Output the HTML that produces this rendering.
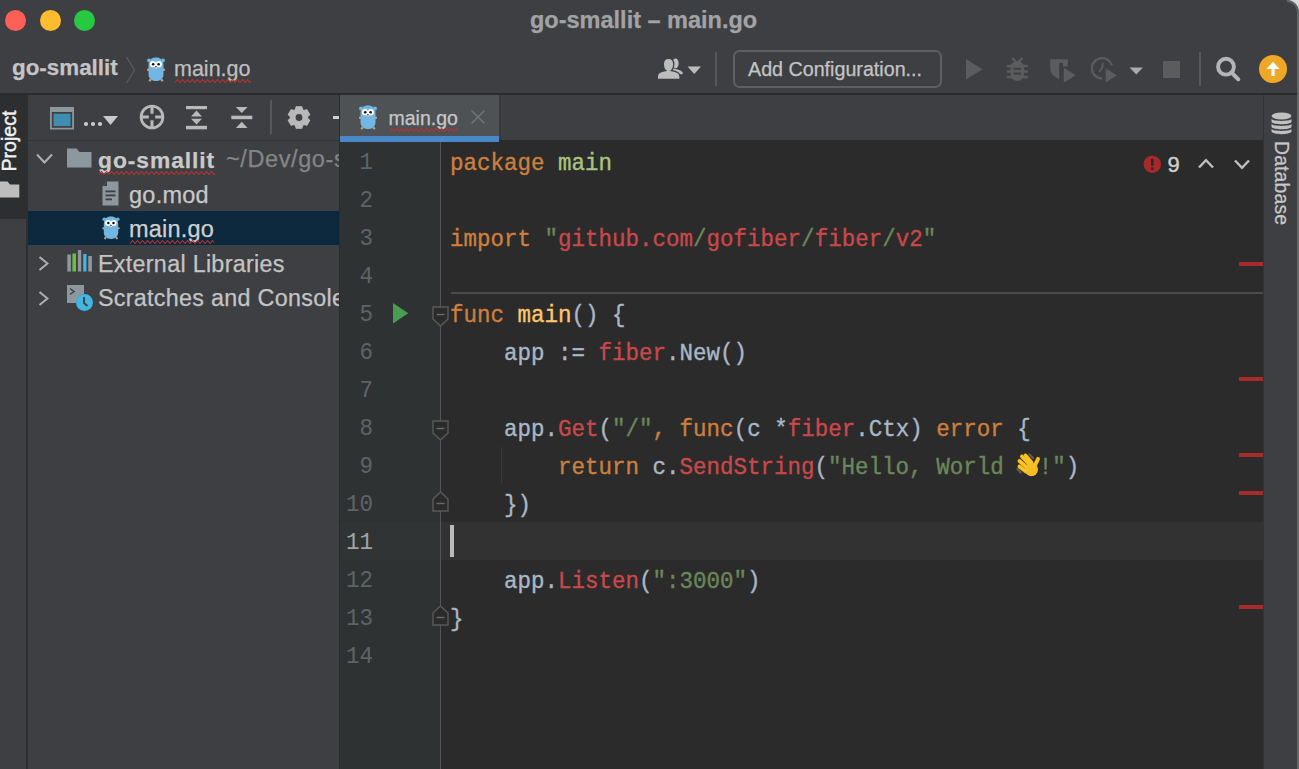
<!DOCTYPE html>
<html><head><meta charset="utf-8">
<style>
*{margin:0;padding:0;box-sizing:border-box}
html,body{width:1299px;height:769px;overflow:hidden;background:#3d3f43}
body{position:relative;font-family:"Liberation Sans",sans-serif}
.a{position:absolute}
.ui{font-family:"Liberation Sans",sans-serif;white-space:nowrap;-webkit-text-stroke:0.25px currentColor}
.mono{font-family:"Liberation Mono",monospace;font-size:22.5px;white-space:pre}
.ln{position:absolute;left:340px;width:33px;text-align:right;font-family:"Liberation Mono",monospace;font-size:22.5px;color:#606366;line-height:38px;height:38px;margin-top:2px;transform:scaleY(1.1);transform-origin:0 25px;}
.cl{position:absolute;left:450px;line-height:38px;height:38px;color:#a9b7c6;margin-top:3px;transform:scaleY(1.08);transform-origin:0 25px;-webkit-text-stroke:0.35px currentColor}
.k{color:#cd7f3e}
.s{color:#6a8759}
.r{color:#c9484a}
.f{color:#ffc66d}
.p{color:#a9c47f}
.mark{position:absolute;left:1239px;width:24px;height:4px;background:#a82a2a}
</style></head><body>

<!-- title bar -->
<div class="a" style="left:0;top:0;width:1299px;height:93px;background:#3d3f43"></div>
<div class="a" style="left:5px;top:10px;width:21px;height:21px;border-radius:50%;background:#fe5f57"></div>
<div class="a" style="left:40px;top:10px;width:21px;height:21px;border-radius:50%;background:#febc2e"></div>
<div class="a" style="left:74px;top:10px;width:21px;height:21px;border-radius:50%;background:#28c840"></div>
<div class="a ui" style="left:530px;top:4.7px;font-size:23.5px;font-weight:bold;color:#a3a3a5;line-height:30px">go-smallit – main.go</div>

<!-- breadcrumb -->
<div class="a ui" style="left:12px;top:53px;font-size:22.4px;font-weight:bold;color:#c4c4c4;line-height:30px">go-smallit</div>

<!-- toolbar bottom border -->
<div class="a" style="left:0;top:93px;width:1299px;height:2px;background:#2b2b2d"></div>

<!-- left strip -->
<div class="a" style="left:0;top:95px;width:26px;height:674px;background:#3d3f43"></div>
<div class="a" style="left:0;top:95px;width:26px;height:124px;background:#2c2e30"></div>
<div class="a" style="left:26px;top:95px;width:2px;height:674px;background:#2d2f31"></div>

<!-- project panel -->
<div class="a" style="left:28px;top:95px;width:311px;height:674px;background:#3d3f43"></div>
<div class="a" style="left:28px;top:140px;width:311px;height:1px;background:#333436"></div>
<div class="a" style="left:28px;top:211px;width:311px;height:34px;background:#0d293e"></div>
<div class="a" style="left:339px;top:95px;width:1px;height:674px;background:#2b2b2b"></div>

<!-- tab bar -->
<div class="a" style="left:340px;top:95px;width:923px;height:45px;background:#3d3f43"></div>
<div class="a" style="left:340px;top:95px;width:159px;height:41px;background:#4e5254"></div>
<div class="a" style="left:499px;top:95px;width:1.5px;height:45px;background:#38393c"></div>


<!-- editor -->
<div class="a" style="left:340px;top:140px;width:923px;height:629px;background:#2b2b2b"></div>
<div class="a" style="left:340px;top:140px;width:100px;height:629px;background:#2f3233"></div>
<div class="a" style="left:340px;top:522px;width:100px;height:38px;background:#313435"></div>
<div class="a" style="left:441px;top:522px;width:822px;height:38px;background:#323232"></div>
<div class="a" style="left:439.5px;top:140px;width:1.6px;height:629px;background:#555555"></div>
<div class="a" style="left:340px;top:136px;width:159px;height:5.6px;background:#4a88c7"></div>
<div class="a" style="left:451px;top:292px;width:812px;height:1.5px;background:#4b4b4b"></div>

<!-- right strip -->
<div class="a" style="left:1263px;top:95px;width:1px;height:674px;background:#323335"></div>
<div class="a" style="left:1264px;top:95px;width:33px;height:674px;background:#3d3f43"></div>
<div class="a" style="left:1297px;top:0;width:2px;height:769px;background:#636567"></div>

<!-- error stripe marks -->
<div class="mark" style="top:262px"></div>
<div class="mark" style="top:376.5px"></div>
<div class="mark" style="top:452.5px"></div>
<div class="mark" style="top:490.5px"></div>
<div class="mark" style="top:604.5px"></div>

<!-- line numbers -->
<div class="ln" style="top:142px">1</div>
<div class="ln" style="top:180px">2</div>
<div class="ln" style="top:218px">3</div>
<div class="ln" style="top:256px">4</div>
<div class="ln" style="top:294px">5</div>
<div class="ln" style="top:332px">6</div>
<div class="ln" style="top:370px">7</div>
<div class="ln" style="top:408px">8</div>
<div class="ln" style="top:446px">9</div>
<div class="ln" style="top:484px">10</div>
<div class="ln" style="top:522px;color:#a4a3a3">11</div>
<div class="ln" style="top:560px">12</div>
<div class="ln" style="top:598px">13</div>
<div class="ln" style="top:636px">14</div>

<!-- code -->
<div class="cl mono" style="top:142px"><span class="k">package</span> <span class="p">main</span></div>
<div class="cl mono" style="top:218px"><span class="k">import</span> <span class="s">"</span><span class="r">github.com</span><span class="s">/</span><span class="r">gofiber</span><span class="s">/</span><span class="r">fiber</span><span class="s">/</span><span class="r">v2</span><span class="s">"</span></div>
<div class="cl mono" style="top:294px"><span class="k">func</span> <span class="f">main</span>() {</div>
<div class="cl mono" style="top:332px">    app := <span class="r">fiber</span>.New()</div>
<div class="cl mono" style="top:408px">    app.<span class="r">Get</span>(<span class="s">"/"</span><span class="k">,</span> <span class="k">func</span>(c *<span class="r">fiber</span>.Ctx) <span class="k">error</span> {</div>
<div class="cl mono" style="top:446px">        <span class="k">return</span> c.<span class="r">SendString</span>(<span class="s">"Hello, World <span style="display:inline-block;width:21.6px"></span>!"</span>)</div>
<div class="cl mono" style="top:484px">    })</div>
<div class="cl mono" style="top:560px">    app.<span class="r">Listen</span>(<span class="s">":3000"</span>)</div>
<div class="cl mono" style="top:598px">}</div>

<!-- caret -->
<div class="a" style="left:450px;top:525px;width:4px;height:32px;background:#bbbbbb"></div>


<!-- SVG defs -->
<svg width="0" height="0" style="position:absolute">
 <defs>
  <symbol id="gopher" viewBox="0 0 18 25">
   <circle cx="2" cy="3.4" r="1.9" fill="#72b6e3"/>
   <circle cx="16" cy="3.4" r="1.9" fill="#72b6e3"/>
   <path d="M1.5 8.5 C1.5 3 4.5 0.5 9 0.5 C13.5 0.5 16.5 3 16.5 8.5 L16.5 17 C16.5 21.5 13.5 24 9 24 C4.5 24 1.5 21.5 1.5 17 Z" fill="#72b6e3"/>
   <circle cx="1" cy="12.8" r="1.2" fill="#c9a083"/>
   <circle cx="17" cy="12.8" r="1.2" fill="#c9a083"/>
   <circle cx="3" cy="23.2" r="1.2" fill="#c9a083"/>
   <circle cx="15" cy="23.2" r="1.2" fill="#c9a083"/>
   <circle cx="6" cy="7.2" r="3.1" fill="#fff"/>
   <circle cx="11.8" cy="7.2" r="3.1" fill="#fff"/>
   <circle cx="6.2" cy="7.2" r="1.3" fill="#111"/>
   <circle cx="11.6" cy="7.2" r="1.3" fill="#111"/>
   <ellipse cx="8.9" cy="10.6" rx="1.3" ry="1.1" fill="#e8d2c0"/>
   <ellipse cx="8.9" cy="9.7" rx="0.8" ry="0.6" fill="#222"/>
  </symbol>
  <symbol id="wavy" viewBox="0 0 200 4" preserveAspectRatio="xMinYMid slice">
   <polyline fill="none" stroke="#b83430" stroke-width="1.05" points="0,3.5 2.5,0.5 5,3.5 7.5,0.5 10,3.5 12.5,0.5 15,3.5 17.5,0.5 20,3.5 22.5,0.5 25,3.5 27.5,0.5 30,3.5 32.5,0.5 35,3.5 37.5,0.5 40,3.5 42.5,0.5 45,3.5 47.5,0.5 50,3.5 52.5,0.5 55,3.5 57.5,0.5 60,3.5 62.5,0.5 65,3.5 67.5,0.5 70,3.5 72.5,0.5 75,3.5 77.5,0.5 80,3.5 82.5,0.5 85,3.5 87.5,0.5 90,3.5 92.5,0.5 95,3.5 97.5,0.5 100,3.5 102.5,0.5 105,3.5 107.5,0.5 110,3.5 112.5,0.5 115,3.5 117.5,0.5 120,3.5 122.5,0.5 125,3.5 127.5,0.5 130,3.5 132.5,0.5 135,3.5 137.5,0.5 140,3.5 142.5,0.5 145,3.5 147.5,0.5 150,3.5"/>
  </symbol>
 </defs>
</svg>

<!-- breadcrumb rest -->
<svg class="a" style="left:125px;top:56px" width="11" height="28" viewBox="0 0 11 28"><polyline points="1.5,1 9.5,14 1.5,27" fill="none" stroke="#5a6061" stroke-width="1.2"/></svg>
<svg class="a" style="left:146.5px;top:56.5px" width="18" height="25"><use href="#gopher"/></svg>
<div class="a ui" style="left:174px;top:54.2px;font-size:21.5px;color:#bfbfbf;line-height:30px">main.go</div>
<svg class="a" style="left:175px;top:79px" width="76" height="4"><use href="#wavy"/></svg>

<!-- user icon -->
<svg class="a" style="left:657px;top:58px" width="27" height="22" viewBox="0 0 27 22">
 <ellipse cx="18.6" cy="5.4" rx="3" ry="5" fill="#bdbdbd"/>
 <path d="M15.5 10.5 C20 11 25 12.5 25.8 14.8 C26 15.8 25 16.3 24 16.3 L18 16.3 Z" fill="#bdbdbd"/>
 <g stroke="#3d3f43" stroke-width="1.3" fill="#bdbdbd">
  <path d="M11.5 0.3 C8.3 0.3 6.3 2.6 6.3 6.3 C6.3 9.3 7.5 11.6 8.6 12.6 C4.2 13.2 0.3 15 0.3 18.2 L0.3 21.3 L23 21.3 L23 18.2 C23 15 19 13.2 14.5 12.6 C15.6 11.6 16.8 9.3 16.8 6.3 C16.8 2.6 14.7 0.3 11.5 0.3 Z"/>
 </g>
</svg>
<svg class="a" style="left:687px;top:66px" width="15" height="9" viewBox="0 0 15 9"><path d="M0.5 0.5 L14 0.5 L7.25 8 Z" fill="#bcbcbc"/></svg>
<div class="a" style="left:715px;top:52px;width:1.5px;height:34px;background:#56585b"></div>

<!-- Add configuration button -->
<div class="a" style="left:732.5px;top:50px;width:209px;height:38px;border:2px solid #5d6063;border-radius:6.5px;background:#3d3f43"></div>
<div class="a ui" style="left:748px;top:54px;font-size:19.7px;color:#c4c4c4;line-height:30px">Add Configuration...</div>

<!-- run toolbar icons (disabled) -->
<svg class="a" style="left:966px;top:59px" width="17" height="21" viewBox="0 0 17 21"><path d="M0 0 L16.5 10.2 L0 20.4 Z" fill="#5b5c5e"/></svg>
<svg class="a" style="left:1006px;top:57px" width="23" height="25" viewBox="0 0 23 25">
 <path d="M6.8 1.5 L10 5 M15.8 1.5 L12.6 5" stroke="#5b5c5e" stroke-width="2.3" stroke-linecap="round" fill="none"/>
 <path d="M11.3 4 C7 4 4.5 7 4.5 11.5 L4.5 16.5 C4.5 21 7.5 24 11.3 24 C15.1 24 18.1 21 18.1 16.5 L18.1 11.5 C18.1 7 15.6 4 11.3 4 Z" fill="#5b5c5e"/>
 <path d="M0.8 9 L21.8 9 M0.8 14.5 L21.8 14.5 M0.8 20 L21.8 20" stroke="#5b5c5e" stroke-width="2.5"/>
 <path d="M7.5 11.7 L15.1 11.7 M7.5 16.6 L15.1 16.6" stroke="#3d3f43" stroke-width="2"/>
</svg>
<svg class="a" style="left:1049px;top:58px" width="28" height="26" viewBox="0 0 28 26">
 <path d="M1.2 1.2 L18.8 1.2 L18.8 8.5 L14 8.5 L14 4.8 L10.2 4.8 L10.2 21 C5 19 1.2 15.5 1.2 10.5 Z" fill="#5b5c5e"/>
 <path d="M14.8 9.7 L26.8 17.2 L14.8 24.8 Z" fill="#5b5c5e"/>
</svg>
<svg class="a" style="left:1091px;top:57px" width="28" height="27" viewBox="0 0 28 27">
 <path d="M11 21.5 A10.2 10.2 0 1 1 20.8 8.3" fill="none" stroke="#5b5c5e" stroke-width="2.3"/>
 <path d="M11.6 6.5 L11.6 10 L8.6 14.2" fill="none" stroke="#5b5c5e" stroke-width="1.9" stroke-linecap="round"/>
 <path d="M14.7 11.3 L26 18.4 L14.7 25.5 Z" fill="#5b5c5e"/>
</svg>
<svg class="a" style="left:1129px;top:66.5px" width="15" height="8" viewBox="0 0 15 8"><path d="M0.5 0.5 L14 0.5 L7.25 7.5 Z" fill="#a9aaab"/></svg>
<div class="a" style="left:1162.5px;top:60.5px;width:17.5px;height:17.5px;background:#5b5c5e"></div>
<div class="a" style="left:1199px;top:52px;width:1.5px;height:34px;background:#56585b"></div>
<svg class="a" style="left:1215px;top:56px" width="27" height="27" viewBox="0 0 27 27">
 <circle cx="11" cy="10.7" r="7.9" fill="none" stroke="#b4b5b6" stroke-width="3.9"/>
 <path d="M16.5 16.5 L23.3 23.3" stroke="#b4b5b6" stroke-width="4" stroke-linecap="round"/>
</svg>
<svg class="a" style="left:1259px;top:55px" width="28" height="28" viewBox="0 0 28 28">
 <circle cx="14" cy="14" r="14" fill="#eea726"/>
 <path d="M14 6.8 L20.6 14 L15.6 14 L15.6 21 L12.5 21 L12.5 14 L7.4 14 Z" fill="#ffffff"/>
</svg>


<!-- left strip label -->
<div class="a ui" style="left:-22px;top:131.5px;width:62px;height:18px;transform:rotate(-90deg);font-size:19.6px;line-height:18px;color:#f0f0f0;text-align:center;-webkit-text-stroke:0.45px #f0f0f0">Project</div>
<svg class="a" style="left:0;top:181px" width="20" height="17" viewBox="0 0 20 17"><path d="M0 0.5 L7.5 0.5 L10 3.5 L19.3 3.5 L19.3 16.5 L0 16.5 Z" fill="#bdbdbd"/></svg>

<!-- project toolbar -->
<svg class="a" style="left:50px;top:107px" width="25" height="23" viewBox="0 0 25 23">
 <rect x="0" y="0" width="24" height="22.5" fill="#8d979e"/>
 <rect x="1.8" y="5" width="20.4" height="15.8" fill="#3d3f43"/>
 <rect x="3.5" y="6.7" width="17" height="12.4" fill="#3f8eb0"/>
</svg>
<div class="a" style="left:84px;top:122px;width:3.6px;height:3.6px;border-radius:50%;background:#c9c9c9"></div>
<div class="a" style="left:91px;top:122px;width:3.6px;height:3.6px;border-radius:50%;background:#c9c9c9"></div>
<div class="a" style="left:98px;top:122px;width:3.6px;height:3.6px;border-radius:50%;background:#c9c9c9"></div>
<svg class="a" style="left:103px;top:115.5px" width="15" height="9" viewBox="0 0 15 9"><path d="M0 0 L15 0 L7.5 9 Z" fill="#c9c9c9"/></svg>
<svg class="a" style="left:139px;top:104px" width="26" height="26" viewBox="0 0 26 26">
 <circle cx="13" cy="13" r="10.9" fill="none" stroke="#b9b9b9" stroke-width="2.8"/>
 <path d="M13 2 L13 9.8 M13 16.2 L13 24 M2 13 L9.8 13 M16.2 13 L24 13" stroke="#b9b9b9" stroke-width="3"/>
</svg>
<svg class="a" style="left:185px;top:105px" width="23" height="25" viewBox="0 0 23 25">
 <rect x="1" y="1" width="21" height="3.2" fill="#b9b9b9"/>
 <rect x="1" y="20.8" width="21" height="3.5" fill="#b9b9b9"/>
 <path d="M6 11.4 L11.5 5.6 L17 11.4 Z M6 13.8 L11.5 19.5 L17 13.8 Z" fill="#b9b9b9"/>
</svg>
<svg class="a" style="left:231px;top:105px" width="23" height="25" viewBox="0 0 23 25">
 <rect x="0.3" y="10.7" width="21" height="3.5" fill="#b9b9b9"/>
 <path d="M4.9 1.9 L16.6 1.9 L10.75 7.9 Z M4.9 23.1 L16.6 23.1 L10.75 16.8 Z" fill="#b9b9b9"/>
</svg>
<div class="a" style="left:270px;top:100px;width:1.5px;height:34px;background:#56585b"></div>
<svg class="a" style="left:287px;top:105px" width="24" height="25" viewBox="0 0 24 25">
 <path d="M8.49 4.65 L9.17 1.87 L14.83 1.87 L15.51 4.65 L17.05 5.54 L19.79 4.74 L22.62 9.63 L20.55 11.61 L20.55 13.39 L22.62 15.37 L19.79 20.26 L17.05 19.46 L15.51 20.35 L14.83 23.13 L9.17 23.13 L8.49 20.35 L6.95 19.46 L4.21 20.26 L1.38 15.37 L3.45 13.39 L3.45 11.61 L1.38 9.63 L4.21 4.74 L6.95 5.54 Z" fill="#b9b9b9" stroke="#b9b9b9" stroke-width="1.2" stroke-linejoin="round"/>
 <circle cx="12" cy="12.5" r="3.4" fill="#3d3f43"/>
</svg>
<div class="a" style="left:333px;top:116px;width:6px;height:3px;background:#d0d0d0"></div>

<!-- tree -->
<svg class="a" style="left:36px;top:153px" width="17" height="11" viewBox="0 0 17 11"><polyline points="1,1.5 8.5,9.5 16,1.5" fill="none" stroke="#b0b0b0" stroke-width="2"/></svg>
<svg class="a" style="left:67px;top:148px" width="25" height="20" viewBox="0 0 25 20"><path d="M0 0.5 L9.5 0.5 L12.5 4 L24.5 4 L24.5 19.5 L0 19.5 Z" fill="#8d979e"/></svg>
<div class="a ui" style="left:98px;top:144.8px;font-size:22.8px;font-weight:bold;letter-spacing:0.95px;color:#cacaca;line-height:30px">go-smallit</div>
<svg class="a" style="left:99px;top:170.5px" width="116" height="4"><use href="#wavy"/></svg>
<div class="a" style="left:226px;top:143px;width:113px;height:32px;overflow:hidden"><div class="ui" style="font-size:23.5px;letter-spacing:0.6px;color:#858585;line-height:32px">~/Dev/go-smallit</div></div>

<svg class="a" style="left:102px;top:181px" width="17" height="25" viewBox="0 0 17 25">
 <path d="M5 0.5 L16.5 0.5 L16.5 24.5 L0.5 24.5 L0.5 5 Z" fill="#8d979e"/>
 <path d="M0.5 5 L5 5 L5 0.5 Z" fill="#3d3f43"/>
 <rect x="3.5" y="9.5" width="10" height="1.8" fill="#3d3f43"/>
 <rect x="3.5" y="13.5" width="10" height="1.8" fill="#3d3f43"/>
 <rect x="3.5" y="17.5" width="6.5" height="1.8" fill="#3d3f43"/>
</svg>
<div class="a ui" style="left:129px;top:179.8px;font-size:23.5px;letter-spacing:0.25px;color:#c8c8c8;line-height:30px">go.mod</div>

<svg class="a" style="left:101.5px;top:216px" width="18" height="24"><use href="#gopher" width="18" height="24"/></svg>
<div class="a ui" style="left:129px;top:214px;font-size:23.5px;letter-spacing:0.2px;color:#d0d0d0;line-height:30px">main.go</div>
<svg class="a" style="left:130px;top:239.5px" width="84" height="4"><use href="#wavy"/></svg>

<svg class="a" style="left:38px;top:256px" width="11" height="15" viewBox="0 0 11 15"><polyline points="1.5,1 9.5,7.5 1.5,14" fill="none" stroke="#b0b0b0" stroke-width="2"/></svg>
<svg class="a" style="left:67px;top:250px" width="25" height="22" viewBox="0 0 25 22">
 <rect x="0.3" y="4.5" width="3.6" height="17" fill="#8d979e"/>
 <rect x="5.4" y="3.5" width="3.6" height="18" fill="#6bbf3a"/>
 <rect x="10.9" y="0" width="3.3" height="21.5" fill="#8d979e"/>
 <rect x="16.2" y="4" width="3.3" height="17.5" fill="#40b6e0"/>
 <rect x="21.3" y="6" width="3.6" height="15.5" fill="#8d979e"/>
</svg>
<div class="a ui" style="left:98px;top:248.5px;font-size:23.3px;letter-spacing:0.3px;color:#c4c4c4;line-height:30px">External Libraries</div>

<svg class="a" style="left:38px;top:291px" width="11" height="15" viewBox="0 0 11 15"><polyline points="1.5,1 9.5,7.5 1.5,14" fill="none" stroke="#b0b0b0" stroke-width="2"/></svg>
<svg class="a" style="left:66px;top:284px" width="28" height="28" viewBox="0 0 28 28">
 <path d="M1 1 L18 1 L18 10 C13 11 10.5 14.5 10.5 19 L1 19 Z" fill="#8d979e"/>
 <path d="M4 4.5 L8 7.5 L4 10.5" fill="none" stroke="#3d3f43" stroke-width="1.5"/>
 <circle cx="18.5" cy="18.5" r="8.5" fill="#40b6e0"/>
 <path d="M18 13 L18 19 L21.5 22" fill="none" stroke="#3d3f43" stroke-width="1.8"/>
</svg>
<div class="a" style="left:98px;top:282px;width:241px;height:32px;overflow:hidden"><div class="ui" style="font-size:23.3px;letter-spacing:0.3px;color:#c4c4c4;line-height:32px;margin-top:-0.5px">Scratches and Consoles</div></div>

<!-- tab content -->
<svg class="a" style="left:359px;top:104.5px" width="18" height="25"><use href="#gopher"/></svg>
<div class="a ui" style="left:388.5px;top:103.5px;font-size:19.5px;color:#c8c8c8;line-height:28px">main.go</div>
<svg class="a" style="left:389px;top:127.5px" width="69" height="4"><use href="#wavy"/></svg>
<svg class="a" style="left:471.3px;top:110.3px" width="14" height="14" viewBox="0 0 14 14"><path d="M1 1 L13 13 M13 1 L1 13" stroke="#6d7375" stroke-width="1.7" stroke-linecap="round"/></svg>

<!-- gutter icons -->
<svg class="a" style="left:392.5px;top:302.5px" width="16" height="21" viewBox="0 0 16 21"><path d="M0 0 L15.3 10.2 L0 20.4 Z" fill="#499c54"/></svg>
<svg class="a" style="left:432px;top:306px" width="17" height="21" viewBox="0 0 17 21"><path d="M1 1 L16 1 L16 13 L8.5 20 L1 13 Z" fill="#2b2b2b" stroke="#5a5a5a" stroke-width="1.4"/><path d="M4.5 8.5 L12.5 8.5" stroke="#6a6a6a" stroke-width="1.4"/></svg>
<svg class="a" style="left:432px;top:420px" width="17" height="21" viewBox="0 0 17 21"><path d="M1 1 L16 1 L16 13 L8.5 20 L1 13 Z" fill="#2b2b2b" stroke="#5a5a5a" stroke-width="1.4"/><path d="M4.5 8.5 L12.5 8.5" stroke="#6a6a6a" stroke-width="1.4"/></svg>
<svg class="a" style="left:432px;top:491px" width="17" height="21" viewBox="0 0 17 21"><path d="M1 20 L16 20 L16 8 L8.5 1 L1 8 Z" fill="#2b2b2b" stroke="#5a5a5a" stroke-width="1.4"/><path d="M4.5 12.5 L12.5 12.5" stroke="#6a6a6a" stroke-width="1.4"/></svg>
<svg class="a" style="left:432px;top:605px" width="17" height="21" viewBox="0 0 17 21"><path d="M1 20 L16 20 L16 8 L8.5 1 L1 8 Z" fill="#2b2b2b" stroke="#5a5a5a" stroke-width="1.4"/><path d="M4.5 12.5 L12.5 12.5" stroke="#6a6a6a" stroke-width="1.4"/></svg>
<div class="a" style="left:501px;top:447px;width:1px;height:36px;background:#3b3b3b"></div>

<!-- error indicator -->
<svg class="a" style="left:1143px;top:155px" width="19" height="19" viewBox="0 0 19 19"><circle cx="9.3" cy="9.2" r="8.7" fill="#a8292a"/><rect x="8" y="3.8" width="2.6" height="7" fill="#2b2b2b"/><rect x="8" y="12.3" width="2.6" height="2.6" fill="#2b2b2b"/></svg>
<div class="a mono" style="left:1167px;top:152px;font-size:22px;color:#cdcdcd;line-height:30px;-webkit-text-stroke:0.4px #cdcdcd">9</div>
<svg class="a" style="left:1198px;top:158px" width="16" height="11" viewBox="0 0 16 11"><polyline points="1,9.5 8,2.2 15,9.5" fill="none" stroke="#c0c0c0" stroke-width="2.4"/></svg>
<svg class="a" style="left:1234px;top:159px" width="16" height="11" viewBox="0 0 16 11"><polyline points="1,1.5 8,8.8 15,1.5" fill="none" stroke="#c0c0c0" stroke-width="2.4"/></svg>

<!-- right strip -->
<svg class="a" style="left:1270.5px;top:112px" width="21" height="23" viewBox="0 0 21 23">
 <ellipse cx="10.5" cy="4" rx="10" ry="3.5" fill="#c0c0c0"/>
 <path d="M0.5 7 C2 9.5 19 9.5 20.5 7 L20.5 10 C19 13 2 13 0.5 10 Z" fill="#c0c0c0"/>
 <path d="M0.5 12 C2 14.5 19 14.5 20.5 12 L20.5 15 C19 18 2 18 0.5 15 Z" fill="#c0c0c0"/>
 <path d="M0.5 17 C2 19.5 19 19.5 20.5 17 L20.5 19.5 C19 23 2 23 0.5 19.5 Z" fill="#c0c0c0"/>
</svg>
<div class="a ui" style="left:1240.3px;top:174px;width:84px;height:18px;transform:rotate(90deg);font-size:19.4px;letter-spacing:0.15px;line-height:18px;color:#c8c8c8;text-align:center">Database</div>

<!-- emoji -->
<svg class="a" style="left:1015px;top:452px" width="26" height="26" viewBox="0 0 26 26">
 <path d="M14.5 2.5 L18 6" stroke="#5a5a5a" stroke-width="2.4" stroke-linecap="round"/>
 <path d="M2.5 17 L5.5 20.5" stroke="#5a5a5a" stroke-width="2.4" stroke-linecap="round"/>
 <g stroke="#c98a00" stroke-width="4.2" stroke-linecap="round" fill="none">
  <path d="M4.5 14.5 L11 19.5"/><path d="M4.5 9 L12.5 16"/><path d="M7 4.5 L14.5 12.5"/><path d="M10.5 3.5 L16.5 10.5"/><path d="M23 7 C22 9.5 20.5 12 19.5 14"/>
 </g>
 <ellipse cx="16.5" cy="17.5" rx="6.5" ry="6.8" fill="#f3b81d"/>
 <g stroke="#f7c52a" stroke-width="3.2" stroke-linecap="round" fill="none">
  <path d="M4.5 14.5 L11 19.5"/><path d="M4.5 9 L12.5 16"/><path d="M7 4.5 L14.5 12.5"/><path d="M10.5 3.5 L16.5 10.5"/><path d="M23 7 C22 9.5 20.5 12 19.5 14"/>
 </g>
 <ellipse cx="16.5" cy="17.8" rx="5.6" ry="5.8" fill="#f5bd22"/>
</svg>

<!-- top-right window corner -->
<svg class="a" style="left:1286px;top:0" width="13" height="13" viewBox="0 0 13 13"><path d="M0 0 L13 0 L13 13 C13 5.8 7.2 0 0 0 Z" fill="#d9d9d9"/><path d="M1 0.9 C7 0.9 12.1 6 12.1 12.5" fill="none" stroke="#5f6164" stroke-width="2"/></svg>

</body></html>
